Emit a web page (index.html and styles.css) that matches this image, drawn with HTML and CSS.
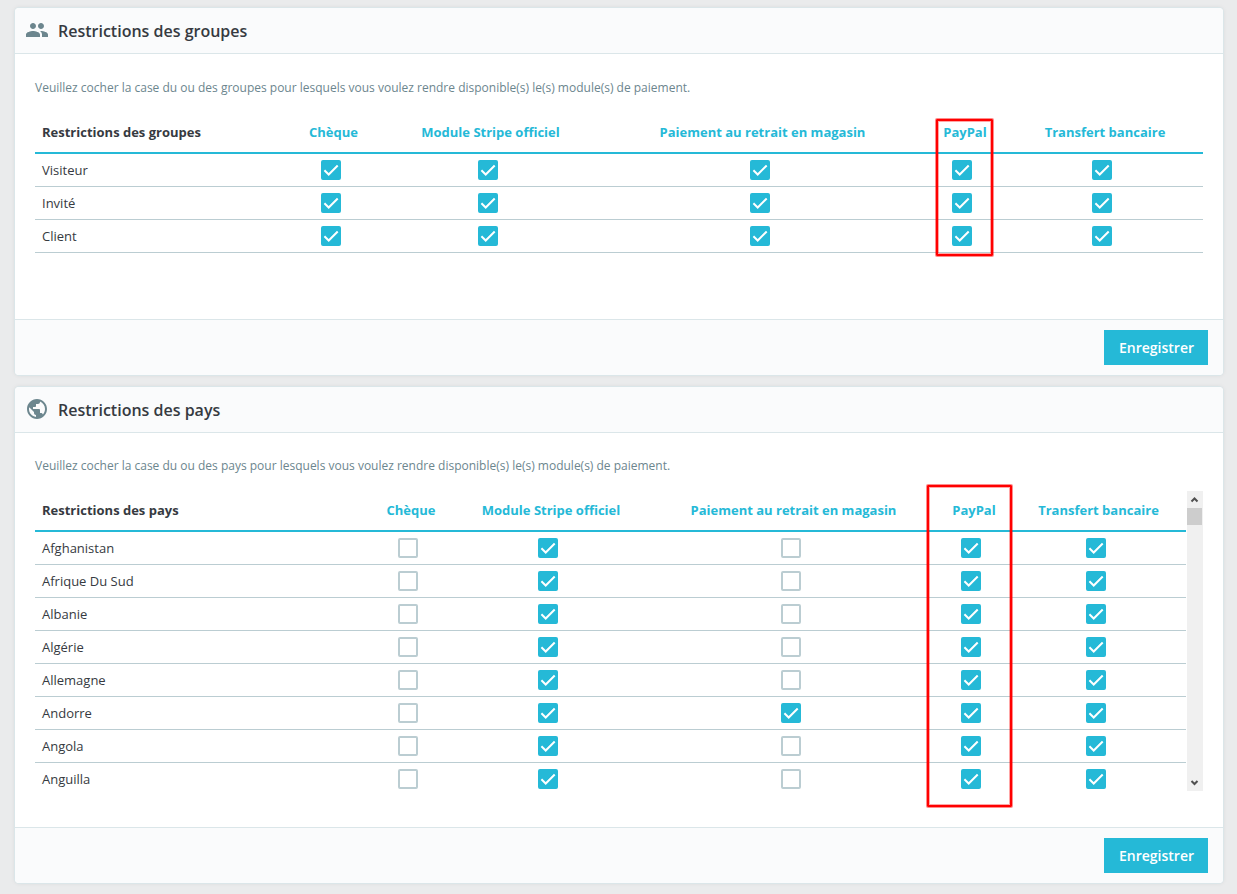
FILE: index.html
```html
<!DOCTYPE html>
<html lang="fr">
<head>
<meta charset="utf-8">
<title>Restrictions de paiement</title>
<link rel="stylesheet" href="styles.css">
</head>
<body>
<main class="page">
  <form class="card">
    <header class="card-header">
      <svg class="icon" viewBox="0 0 24 24" aria-hidden="true"><path d="M16 11c1.66 0 2.99-1.34 2.99-3S17.66 5 16 5s-3 1.34-3 3 1.34 3 3 3zm-8 0c1.66 0 2.99-1.34 2.99-3S9.66 5 8 5 5 6.340 5 8s1.340 3 3 3zm0 2c-2.330 0-7 1.170-7 3.500V19h14v-2.500C15 14.170 10.330 13 8 13zm8 0c-.29 0-.62.02-.97.05 1.160.84 1.970 1.970 1.970 3.450V19h6v-2.500c0-2.330-4.670-3.500-7-3.500z"/></svg>
      <h2 class="card-title">Restrictions des groupes</h2>
    </header>
    <div class="card-body">
      <p class="hint">Veuillez cocher la case du ou des groupes pour lesquels vous voulez rendre disponible(s) le(s) module(s) de paiement.</p>
      <div class="table-area groups-area">
        <table class="grid">
          <colgroup><col class="g-name"><col class="g-cheque"><col class="g-stripe"><col class="g-store"><col class="g-paypal"><col class="g-bank"></colgroup>
          <thead><tr><th scope="col">Restrictions des groupes</th><th scope="col">Chèque</th><th scope="col">Module Stripe officiel</th><th scope="col">Paiement au retrait en magasin</th><th scope="col">PayPal</th><th scope="col">Transfert bancaire</th></tr></thead>
          <tbody>
            <tr><td>Visiteur</td><td><input type="checkbox" aria-label="Visiteur, Chèque" checked></td><td><input type="checkbox" aria-label="Visiteur, Module Stripe officiel" checked></td><td><input type="checkbox" aria-label="Visiteur, Paiement au retrait en magasin" checked></td><td><input type="checkbox" aria-label="Visiteur, PayPal" checked></td><td><input type="checkbox" aria-label="Visiteur, Transfert bancaire" checked></td></tr>
            <tr><td>Invité</td><td><input type="checkbox" aria-label="Invité, Chèque" checked></td><td><input type="checkbox" aria-label="Invité, Module Stripe officiel" checked></td><td><input type="checkbox" aria-label="Invité, Paiement au retrait en magasin" checked></td><td><input type="checkbox" aria-label="Invité, PayPal" checked></td><td><input type="checkbox" aria-label="Invité, Transfert bancaire" checked></td></tr>
            <tr><td>Client</td><td><input type="checkbox" aria-label="Client, Chèque" checked></td><td><input type="checkbox" aria-label="Client, Module Stripe officiel" checked></td><td><input type="checkbox" aria-label="Client, Paiement au retrait en magasin" checked></td><td><input type="checkbox" aria-label="Client, PayPal" checked></td><td><input type="checkbox" aria-label="Client, Transfert bancaire" checked></td></tr>
          </tbody>
        </table>
        <div class="highlight highlight-groups"></div>
      </div>
    </div>
    <footer class="card-footer"><button class="save" type="button">Enregistrer</button></footer>
  </form>

  <form class="card">
    <header class="card-header">
      <svg class="icon" viewBox="0 0 24 24" aria-hidden="true"><path d="M12 2C6.480 2 2 6.480 2 12s4.480 10 10 10 10-4.480 10-10S17.520 2 12 2zm-1 17.930c-3.950-.49-7-3.850-7-7.930 0-.62.08-1.210.21-1.790L9 15v1c0 1.100.9 2 2 2v1.930zm6.900-2.540c-.26-.81-1-1.390-1.900-1.390h-1v-3c0-.55-.45-1-1-1H8v-2h2c.55 0 1-.45 1-1V7h2c1.100 0 2-.9 2-2v-.41c2.930 1.190 5 4.060 5 7.410 0 2.080-.8 3.970-2.100 5.390z"/></svg>
      <h2 class="card-title">Restrictions des pays</h2>
    </header>
    <div class="card-body countries-body">
      <p class="hint">Veuillez cocher la case du ou des pays pour lesquels vous voulez rendre disponible(s) le(s) module(s) de paiement.</p>
      <div class="table-area scroll-area">
        <div class="viewport">
          <table class="grid">
            <colgroup><col class="c-name"><col class="c-cheque"><col class="c-stripe"><col class="c-store"><col class="c-paypal"><col class="c-bank"></colgroup>
            <thead><tr><th scope="col">Restrictions des pays</th><th scope="col">Chèque</th><th scope="col">Module Stripe officiel</th><th scope="col">Paiement au retrait en magasin</th><th scope="col">PayPal</th><th scope="col">Transfert bancaire</th></tr></thead>
            <tbody>
              <tr><td>Afghanistan</td><td><input type="checkbox" aria-label="Afghanistan, Chèque"></td><td><input type="checkbox" aria-label="Afghanistan, Module Stripe officiel" checked></td><td><input type="checkbox" aria-label="Afghanistan, Paiement au retrait en magasin"></td><td><input type="checkbox" aria-label="Afghanistan, PayPal" checked></td><td><input type="checkbox" aria-label="Afghanistan, Transfert bancaire" checked></td></tr>
              <tr><td>Afrique Du Sud</td><td><input type="checkbox" aria-label="Afrique Du Sud, Chèque"></td><td><input type="checkbox" aria-label="Afrique Du Sud, Module Stripe officiel" checked></td><td><input type="checkbox" aria-label="Afrique Du Sud, Paiement au retrait en magasin"></td><td><input type="checkbox" aria-label="Afrique Du Sud, PayPal" checked></td><td><input type="checkbox" aria-label="Afrique Du Sud, Transfert bancaire" checked></td></tr>
              <tr><td>Albanie</td><td><input type="checkbox" aria-label="Albanie, Chèque"></td><td><input type="checkbox" aria-label="Albanie, Module Stripe officiel" checked></td><td><input type="checkbox" aria-label="Albanie, Paiement au retrait en magasin"></td><td><input type="checkbox" aria-label="Albanie, PayPal" checked></td><td><input type="checkbox" aria-label="Albanie, Transfert bancaire" checked></td></tr>
              <tr><td>Algérie</td><td><input type="checkbox" aria-label="Algérie, Chèque"></td><td><input type="checkbox" aria-label="Algérie, Module Stripe officiel" checked></td><td><input type="checkbox" aria-label="Algérie, Paiement au retrait en magasin"></td><td><input type="checkbox" aria-label="Algérie, PayPal" checked></td><td><input type="checkbox" aria-label="Algérie, Transfert bancaire" checked></td></tr>
              <tr><td>Allemagne</td><td><input type="checkbox" aria-label="Allemagne, Chèque"></td><td><input type="checkbox" aria-label="Allemagne, Module Stripe officiel" checked></td><td><input type="checkbox" aria-label="Allemagne, Paiement au retrait en magasin"></td><td><input type="checkbox" aria-label="Allemagne, PayPal" checked></td><td><input type="checkbox" aria-label="Allemagne, Transfert bancaire" checked></td></tr>
              <tr><td>Andorre</td><td><input type="checkbox" aria-label="Andorre, Chèque"></td><td><input type="checkbox" aria-label="Andorre, Module Stripe officiel" checked></td><td><input type="checkbox" aria-label="Andorre, Paiement au retrait en magasin" checked></td><td><input type="checkbox" aria-label="Andorre, PayPal" checked></td><td><input type="checkbox" aria-label="Andorre, Transfert bancaire" checked></td></tr>
              <tr><td>Angola</td><td><input type="checkbox" aria-label="Angola, Chèque"></td><td><input type="checkbox" aria-label="Angola, Module Stripe officiel" checked></td><td><input type="checkbox" aria-label="Angola, Paiement au retrait en magasin"></td><td><input type="checkbox" aria-label="Angola, PayPal" checked></td><td><input type="checkbox" aria-label="Angola, Transfert bancaire" checked></td></tr>
              <tr><td>Anguilla</td><td><input type="checkbox" aria-label="Anguilla, Chèque"></td><td><input type="checkbox" aria-label="Anguilla, Module Stripe officiel" checked></td><td><input type="checkbox" aria-label="Anguilla, Paiement au retrait en magasin"></td><td><input type="checkbox" aria-label="Anguilla, PayPal" checked></td><td><input type="checkbox" aria-label="Anguilla, Transfert bancaire" checked></td></tr>
            </tbody>
          </table>
        </div>
        <div class="scrollbar">
          <button class="arrow" type="button" aria-label="Défiler vers le haut"><svg viewBox="0 0 15 17" aria-hidden="true"><path d="M4.500 10.500l3-3 3 3"/></svg></button>
          <div class="track"><div class="thumb"></div></div>
          <button class="arrow" type="button" aria-label="Défiler vers le bas"><svg viewBox="0 0 15 17" aria-hidden="true"><path d="M4.500 7l3 3 3-3"/></svg></button>
        </div>
        <div class="highlight highlight-countries"></div>
      </div>
    </div>
    <footer class="card-footer"><button class="save" type="button">Enregistrer</button></footer>
  </form>
</main>
</body>
</html>
```
FILE: styles.css
```css
* { box-sizing: border-box; }

body {
  margin: 0;
  background: #eaebec;
  color: #363a41;
  font-family: "Open Sans", "Noto Sans", sans-serif;
  font-size: 13px;
}

.page {
  display: flex;
  flex-direction: column;
  gap: 12px;
  padding: 8px 14px 11px 15px;
}

.card {
  background: #fff;
  border-radius: 4px;
  box-shadow: 0 0 0 1px #dbe6e9, 0 0 4px 1px rgba(0, 0, 0, 0.06);
  overflow: hidden;
}

.card-header {
  display: flex;
  align-items: center;
  gap: 9px;
  height: 46px;
  padding: 0 10px;
  background: #fafbfc;
  border-bottom: 1px solid #dbe6e9;
}

.icon {
  width: 24px;
  height: 24px;
  margin-bottom: 2px;
  fill: #6c868e;
}

.card-title {
  margin: 0;
  font-size: 16px;
  font-weight: 600;
  line-height: 24px;
}

.card-body { padding: 24px 20px 36px; }
.countries-body { padding-top: 23px; }

.hint {
  margin: 0 0 15px;
  color: #6c868e;
  font-size: 12px;
  line-height: 20px;
}

.table-area { position: relative; }
.groups-area { margin-bottom: 30px; }

.grid {
  width: 100%;
  table-layout: fixed;
  border-collapse: separate;
  border-spacing: 0;
}

.grid th {
  height: 41px;
  padding: 0 2px 2px;
  border-bottom: 2px solid #25b9d7;
  color: #25b9d7;
  font-weight: 700;
  line-height: 20px;
  text-align: center;
}

.grid td {
  height: 33px;
  padding: 0 6px 0 0;
  border-bottom: 1px solid #bbcdd2;
  line-height: 20px;
}

.grid th:first-child,
.grid td:first-child {
  padding-left: 7px;
  color: #363a41;
  text-align: left;
}

.g-name { width: 253px; }
.g-cheque { width: 91px; }
.g-stripe { width: 223px; }
.g-store { width: 321px; }
.g-paypal { width: 84px; }
.g-bank { width: 196px; }

.c-name { width: 335px; }
.c-cheque { width: 82px; }
.c-stripe { width: 198px; }
.c-store { width: 287px; }
.c-paypal { width: 74px; }
.c-bank { width: 175px; }

input[type="checkbox"] {
  appearance: none;
  display: block;
  width: 20px;
  height: 20px;
  margin: 0 auto;
  border: 2px solid #bbcdd2;
  border-radius: 2px;
  background: #fff;
}

input[type="checkbox"]:checked {
  border-color: #25b9d7;
  background: #25b9d7 url("data:image/svg+xml,%3Csvg xmlns='http://www.w3.org/2000/svg' viewBox='0 0 20 20'%3E%3Cpath d='M3.400 10.300l4.300 4.200 9-9' fill='none' stroke='white' stroke-width='2'/%3E%3C/svg%3E") center / 20px 20px border-box;
}

.scroll-area {
  display: flex;
  gap: 1px;
  height: 300px;
}

.viewport {
  flex: 1;
  overflow: hidden;
}

.scrollbar {
  display: flex;
  flex-direction: column;
  width: 16px;
  padding-right: 1px;
  background: #f0f0f0;
}

.arrow {
  display: block;
  height: 17px;
  padding: 0;
  border: 0;
  background: none;
}

.arrow svg {
  display: block;
  width: 15px;
  height: 17px;
  fill: none;
  stroke: #505050;
  stroke-width: 2;
}

.track { flex: 1; }

.thumb {
  height: 17px;
  background: #cdcdcd;
}

.highlight {
  position: absolute;
  border: 2px solid #f00;
  border-radius: 1px;
  box-shadow: 0 0 0 1px rgba(255, 0, 0, 0.45), inset 0 0 0 1px rgba(255, 0, 0, 0.35);
  pointer-events: none;
}

.highlight-groups {
  top: 6px;
  left: 77.1%;
  width: 57px;
  height: 137px;
}

.highlight-countries {
  top: -6px;
  left: 76.4%;
  width: 85px;
  height: 322px;
}

.card-footer {
  display: flex;
  justify-content: flex-end;
  padding: 10px 15px;
  background: #fafbfc;
  border-top: 1px solid #dbe6e9;
}

.save {
  height: 35px;
  padding: 0 14px 0 15px;
  border: 0;
  background: #25b9d7;
  color: #fff;
  font-family: inherit;
  font-size: 14px;
  font-weight: 600;
}
```
